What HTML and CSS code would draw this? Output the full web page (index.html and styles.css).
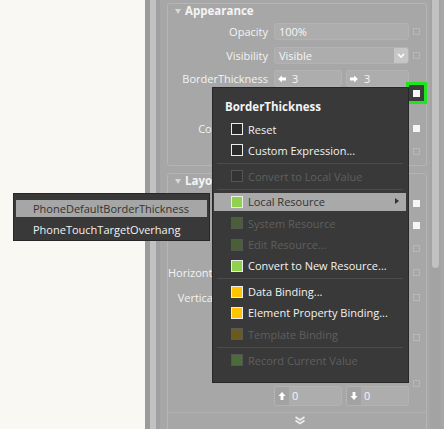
FILE: index.html
```html
<!DOCTYPE html>
<html>
<head>
<meta charset="utf-8">
<link rel="stylesheet" href="styles.css">
</head>
<body>
<div class="app">
  <div class="canvas"></div>
  <div class="panel">
    <div class="edge"></div>
    <div class="content">
      <section class="group">
        <div class="group-head"><span class="tri"></span>Appearance</div>
        <div class="rows">
          <div class="row"><span class="lbl">Opacity</span><div class="field"><span class="txt">100%</span></div><span class="mark faint"></span></div>
          <div class="row"><span class="lbl">Visibility</span><div class="field combo"><span class="txt">Visible</span><span class="drop"><svg width="8" height="5" viewBox="0 0 8 5"><path d="M1 1 L4 4 L7 1" fill="none" stroke="#fff" stroke-width="1.6"/></svg></span></div><span class="mark faint"></span></div>
          <div class="row"><span class="lbl">BorderThickness</span>
            <div class="pair">
              <div class="field a"><span class="ico"><svg width="8" height="8" viewBox="0 0 8 8"><path d="M0 4 L4 0.5 L4 2.6 L8 2.6 L8 5.4 L4 5.4 L4 7.5 Z" fill="#fff"/></svg></span><span class="txt">3</span></div>
              <div class="field b"><span class="ico"><svg width="8" height="8" viewBox="0 0 8 8"><path d="M8 4 L4 0.5 L4 2.6 L0 2.6 L0 5.4 L4 5.4 L4 7.5 Z" fill="#fff"/></svg></span><span class="txt">3</span></div>
            </div><span class="mark none"></span></div>
          <div class="row"><span class="lbl"></span>
            <div class="pair">
              <div class="field a"></div>
              <div class="field b"></div>
            </div><span class="mark none"></span></div>
          <div class="row push"><span class="lbl clip"><span>CornerRadius</span></span><div class="field"></div><span class="mark on"></span></div>
          <div class="row"><span class="lbl"></span><div class="field"></div><span class="mark faint"></span></div>
        </div>
      </section>

      <section class="group second">
        <div class="group-head clip-head"><span class="tri"></span><span class="head-txt">Layout</span></div>
        <div class="rows tight">
          <div class="row"><span class="lbl"></span><div class="field"></div><span class="mark on"></span></div>
          <div class="row"><span class="lbl"></span><div class="field"></div><span class="mark on"></span></div>
          <div class="row"><span class="lbl"></span><div class="field"></div><span class="mark faint"></span></div>
          <div class="row tall"><span class="lbl clip"><span>HorizontalAlignment</span></span><div class="field"></div><span class="mark faint"></span></div>
          <div class="row tall"><span class="lbl clip"><span>VerticalAlignment</span></span><div class="field"></div><span class="mark faint"></span></div>
          <div class="row gapped"><span class="lbl"></span><div class="field"></div><span class="mark faint"></span></div>
          <div class="margin-block">
            <div class="margin-rows">
              <div class="row tall"><span class="lbl"></span>
                <div class="pair">
                  <div class="field a"></div>
                  <div class="field b"></div>
                </div></div>
              <div class="row tall"><span class="lbl"></span>
                <div class="pair">
                  <div class="field a"><span class="ico dk"><svg width="8" height="8" viewBox="0 0 8 8"><path d="M4 0 L7.5 4 L5.4 4 L5.4 8 L2.6 8 L2.6 4 L0.5 4 Z" fill="#fff"/></svg></span><span class="txt">0</span></div>
                  <div class="field b"><span class="ico dk"><svg width="8" height="8" viewBox="0 0 8 8"><path d="M4 8 L7.5 4 L5.4 4 L5.4 0 L2.6 0 L2.6 4 L0.5 4 Z" fill="#fff"/></svg></span><span class="txt">0</span></div>
                </div></div>
            </div>
            <span class="mark faint"></span>
          </div>
        </div>
        <div class="more">
          <svg width="12" height="9" viewBox="0 0 12 9"><path d="M1.5 1 L6 4 L10.5 1 M1.5 4.5 L6 7.5 L10.5 4.5" fill="none" stroke="#ececec" stroke-width="1.7"/></svg>
        </div>
      </section>
    </div>
    <div class="scroll"><div class="thumb"></div></div>
  </div>

  <div class="hot"><span></span></div>

  <div class="menu">
    <div class="menu-head">BorderThickness</div>
    <div class="item"><span class="box plain"></span>Reset</div>
    <div class="item"><span class="box plain"></span>Custom Expression...</div>
    <div class="sep"></div>
    <div class="item off"><span class="box plain-off"></span>Convert to Local Value</div>
    <div class="sep"></div>
    <div class="item hl"><span class="box green"></span>Local Resource<span class="caret"></span></div>
    <div class="item off"><span class="box green-off"></span>System Resource</div>
    <div class="item off"><span class="box green-off"></span>Edit Resource...</div>
    <div class="item"><span class="box green"></span>Convert to New Resource...</div>
    <div class="sep"></div>
    <div class="item"><span class="box yellow"></span>Data Binding...</div>
    <div class="item"><span class="box yellow"></span>Element Property Binding...</div>
    <div class="item off"><span class="box yellow-off"></span>Template Binding</div>
    <div class="sep"></div>
    <div class="item off"><span class="box rec-off"></span>Record Current Value</div>
  </div>

  <div class="submenu">
    <div class="sub-item hl">PhoneDefaultBorderThickness</div>
    <div class="sub-item">PhoneTouchTargetOverhang</div>
  </div>
</div>
</body>
</html>
```

FILE: styles.css
```css
* { box-sizing: border-box; }

body {
  margin: 0;
  width: 444px;
  height: 429px;
  overflow: hidden;
  background: #f9f8f3;
  font-family: "Open Sans", "Noto Sans", sans-serif;
  font-size: 11px;
  color: #f2f2f2;
}

.app {
  position: relative;
  display: flex;
  width: 444px;
  height: 429px;
}

.canvas {
  width: 145px;
  flex: none;
  background: #f9f8f3;
}

.panel {
  flex: 1;
  display: flex;
  background: #a7a7a7;
  overflow: hidden;
}

.edge {
  width: 15px;
  flex: none;
  background: linear-gradient(to right, #9b9b9b 0 5px, #c2c2c2 5px 11px, #a0a0a0 11px 15px);
}

.content {
  width: 267px;
  flex: none;
  padding: 3px 0 0 7px;
}

.group {
  width: 260px;
  border: 1px solid #b5b5b5;
  border-radius: 3px;
}

.group.second {
  margin-top: 7px;
}

.group-head {
  height: 14px;
  line-height: 14px;
  padding-left: 17px;
  position: relative;
  font-weight: bold;
  font-size: 11.5px;
  color: #f4f4f4;
  white-space: nowrap;
}

.clip-head {
  width: 44px;
  overflow: hidden;
}

.tri {
  position: absolute;
  left: 7px;
  top: 5px;
  width: 0;
  height: 0;
  border-left: 3.5px solid transparent;
  border-right: 3.5px solid transparent;
  border-top: 5px solid #d8d8d8;
}

.rows {
  display: flex;
  flex-direction: column;
  gap: 6.5px;
  padding: 5px 0 5px;
}

.rows.tight {
  gap: 5.5px;
  padding-top: 6.5px;
  padding-bottom: 0;
}

.row {
  display: flex;
  align-items: center;
  height: 17px;
  flex: none;
}

.row.push { margin-top: 2.5px; }
.row.tall { height: 20px; }
.row.gapped { margin-top: 16px; }

.lbl {
  width: 100px;
  flex: none;
  text-align: right;
  white-space: nowrap;
  color: #f3f3f3;
}

.lbl.clip {
  width: 44px;
  margin-right: 56px;
  overflow: hidden;
  text-align: left;
}

.lbl.clip span {
  display: block;
  width: 100px;
  text-align: right;
}

.field {
  width: 135px;
  height: 100%;
  margin-left: 6px;
  flex: none;
  display: flex;
  align-items: center;
  background: #adadad;
  border: 1px solid #b3b3b3;
  border-radius: 3px;
  overflow: hidden;
}

.txt {
  padding-left: 4px;
  color: #f6f6f6;
  white-space: nowrap;
}

.drop {
  margin-left: auto;
  width: 14px;
  height: 100%;
  background: #c6c6c6;
  display: flex;
  align-items: center;
  justify-content: center;
}

.pair {
  display: flex;
  gap: 4px;
  margin-left: 6px;
  width: 135px;
  height: 100%;
  flex: none;
}

.pair .field { margin-left: 0; }
.pair .field.a { width: 68px; }
.pair .field.b { width: 63px; }

.ico {
  width: 14px;
  height: 100%;
  flex: none;
  display: flex;
  align-items: center;
  justify-content: center;
}

.ico.dk { background: #a2a2a2; }
.ico + .txt { padding-left: 3px; }

.mark {
  width: 7px;
  height: 7px;
  margin-left: 4px;
  flex: none;
}

.mark.faint { border: 1px solid #b8b8b8; }
.mark.on { background: #f6f6f6; }

.margin-block {
  display: flex;
  align-items: center;
  margin-top: 10px;
}

.margin-rows {
  display: flex;
  flex-direction: column;
  gap: 4px;
}

.more {
  margin-top: 6px;
  border-top: 1px solid #b1b1b1;
  height: 30px;
  display: flex;
  justify-content: center;
  padding-top: 3px;
  padding-left: 6px;
}

.scroll {
  width: 11px;
  margin-left: 3px;
  flex: none;
  background: #a3a3a3;
  padding: 0 2px;
}

.thumb {
  height: 268px;
  background: #c1c1c1;
  border-radius: 0 0 4px 4px;
}

/* overlays */
.hot {
  position: absolute;
  left: 406px;
  top: 82px;
  width: 21px;
  height: 22px;
  border: 3px solid #1fe41f;
  background: #3d3d3d;
  display: flex;
  align-items: center;
  justify-content: center;
}

.hot span {
  width: 7px;
  height: 7px;
  background: #f8f8f8;
}

.menu {
  position: absolute;
  left: 212px;
  top: 87px;
  width: 197px;
  height: 296px;
  background: #393939;
  border: 1px solid #272727;
  padding: 0 2px 0 1px;
}

.menu-head {
  padding: 11px 0 0 11px;
  height: 30.4px;
  line-height: 16px;
  font-weight: bold;
  font-size: 11.5px;
  color: #f4f4f4;
}

.item {
  position: relative;
  height: 21.3px;
  display: flex;
  align-items: center;
  padding-left: 17px;
  border-top: 2px solid transparent;
  border-bottom: 2px solid transparent;
  background-clip: padding-box;
  white-space: nowrap;
  color: #f2f2f2;
}

.item.hl {
  background-color: #a9a9a9;
  color: #333;
}

.item.off { color: #5f5f5f; }

.box {
  width: 12px;
  height: 12px;
  margin-right: 5px;
  flex: none;
  border: 1px solid #ececec;
}

.box.plain { background: #2a2a2a; }
.box.plain-off { background: #333; border-color: #555; }
.box.green { background: #8fd24c; }
.box.green-off { background: #4a5f38; border-color: #555; }
.box.yellow { background: #ffc600; }
.box.yellow-off { background: #6b5a1e; border-color: #5a5a5a; }
.box.rec-off { background: #4c6a3a; border-color: #555; }

.caret {
  position: absolute;
  right: 7px;
  top: 5px;
  width: 0;
  height: 0;
  border-top: 3.5px solid transparent;
  border-bottom: 3.5px solid transparent;
  border-left: 4px solid #333;
}

.sep {
  height: 4.5px;
  margin: 0 3px;
  display: flex;
  align-items: center;
}

.sep::before {
  content: "";
  flex: 1;
  height: 1px;
  background: #4c4c4c;
}

.submenu {
  position: absolute;
  left: 13px;
  top: 193px;
  width: 197px;
  height: 48px;
  background: #393939;
  border: 1px solid #272727;
  padding: 4px 2px 0 2px;
}

.sub-item {
  height: 21px;
  display: flex;
  align-items: center;
  padding-left: 17px;
  border-top: 2px solid transparent;
  border-bottom: 2px solid transparent;
  background-clip: padding-box;
  white-space: nowrap;
  color: #f2f2f2;
}

.sub-item.hl {
  background-color: #a6a6a6;
  color: #333;
}
```
